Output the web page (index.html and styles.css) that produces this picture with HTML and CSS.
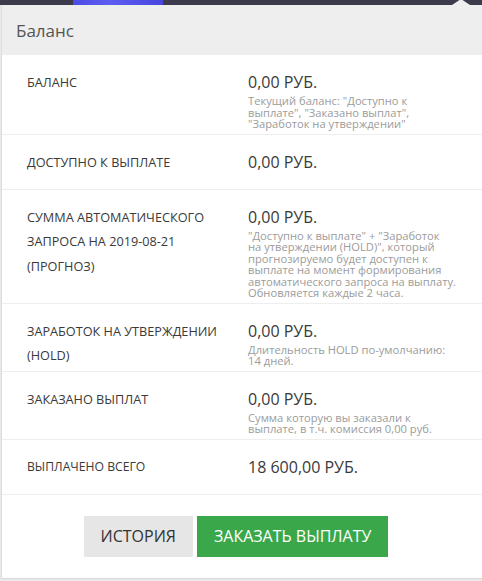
FILE: index.html
```html
<!DOCTYPE html>
<html lang="ru">
<head>
<meta charset="UTF-8">
<meta name="viewport" content="width=device-width, initial-scale=1.0">
<title>Баланс</title>
<link rel="stylesheet" href="styles.css">
</head>
<body>
  <div class="topbar">
    <span class="topbar-banner"></span>
  </div>

  <div class="popup">
    <span class="popup-caret"></span>
    <div class="popup-head">Баланс</div>

    <div class="balance-row">
      <div class="balance-label">Баланс</div>
      <div class="balance-value">
        <div class="amount">0,00 РУБ.</div>
        <div class="hint">Текущий баланс: "Доступно к<br>выплате", "Заказано выплат",<br>"Заработок на утверждении"</div>
      </div>
    </div>

    <div class="balance-row">
      <div class="balance-label">Доступно к выплате</div>
      <div class="balance-value">
        <div class="amount">0,00 РУБ.</div>
      </div>
    </div>

    <div class="balance-row">
      <div class="balance-label">Сумма автоматического запроса на 2019-08-21 (прогноз)</div>
      <div class="balance-value">
        <div class="amount">0,00 РУБ.</div>
        <div class="hint">"Доступно к выплате" + "Заработок<br>на утверждении (HOLD)", который<br>прогнозируемо будет доступен к<br>выплате на момент формирования<br>автоматического запроса на выплату.<br>Обновляется каждые 2 часа.</div>
      </div>
    </div>

    <div class="balance-row">
      <div class="balance-label">Заработок на утверждении (HOLD)</div>
      <div class="balance-value">
        <div class="amount">0,00 РУБ.</div>
        <div class="hint">Длительность HOLD по-умолчанию:<br>14 дней.</div>
      </div>
    </div>

    <div class="balance-row">
      <div class="balance-label">Заказано выплат</div>
      <div class="balance-value">
        <div class="amount">0,00 РУБ.</div>
        <div class="hint">Сумма которую вы заказали к<br>выплате, в т.ч. комиссия 0,00 руб.</div>
      </div>
    </div>

    <div class="balance-row">
      <div class="balance-label small">Выплачено всего</div>
      <div class="balance-value">
        <div class="amount">18 600,00 РУБ.</div>
      </div>
    </div>

    <div class="popup-foot">
      <button class="btn btn-grey">История</button>
      <button class="btn btn-green">Заказать выплату</button>
    </div>
  </div>
</body>
</html>
```

FILE: styles.css
```css
html, body {
  margin: 0;
  padding: 0;
  overflow: hidden;
}
body {
  font-family: "Open Sans", "Noto Sans", sans-serif;
  background-color: #e9e9e9;
  color: #333333;
}
.topbar {
  height: 5px;
  background-color: #3c3b4c;
}
.topbar-banner {
  display: block;
  margin-left: 73px;
  width: 90px;
  height: 5px;
  background: linear-gradient(90deg, #4b4be6, #5d5df0 40%, #4646e0);
}
.popup {
  position: relative;
  width: 492px;
  margin-left: 1px;
  background-color: #ffffff;
  border-left: 1px solid #dddddd;
  border-bottom: 1px solid #d8d8d8;
}
.popup-caret {
  position: absolute;
  left: 450px;
  top: -6px;
  width: 0;
  height: 0;
  border-left: 9px solid transparent;
  border-right: 9px solid transparent;
  border-bottom: 6px solid #eeeeee;
}
.popup-head {
  height: 50px;
  line-height: 51px;
  padding-left: 14px;
  background-color: #eeeeee;
  font-size: 17px;
  color: #555555;
}
.balance-row {
  display: grid;
  grid-template-columns: 246px 230px;
  align-items: start;
  padding: 15px 0 14px;
  border-bottom: 1px solid #eeeeee;
}
.balance-label {
  padding-left: 25px;
  padding-right: 10px;
  margin-bottom: -12px;
  font-size: 12.7px;
  line-height: 24.5px;
  text-transform: uppercase;
  color: #3a3a3a;
}
.balance-label.small {
  font-size: 12.2px;
}
.amount {
  font-size: 16px;
  line-height: 25px;
  color: #3a3a3a;
}
.hint {
  font-size: 11.2px;
  line-height: 11.5px;
  color: #9c9c9c;
  margin-bottom: -10px;
}
.popup-foot {
  display: flex;
  justify-content: center;
  gap: 4px;
  padding: 21px 24px 21px 0;
}
.btn {
  height: 41px;
  border: none;
  border-radius: 0;
  font-family: inherit;
  font-size: 16px;
  text-transform: uppercase;
  cursor: pointer;
}
.btn-grey {
  padding: 0 17px;
  background-color: #e6e6e6;
  color: #333333;
}
.btn-green {
  padding: 0 17px;
  background-color: #3aa84a;
  color: #ffffff;
}
```
